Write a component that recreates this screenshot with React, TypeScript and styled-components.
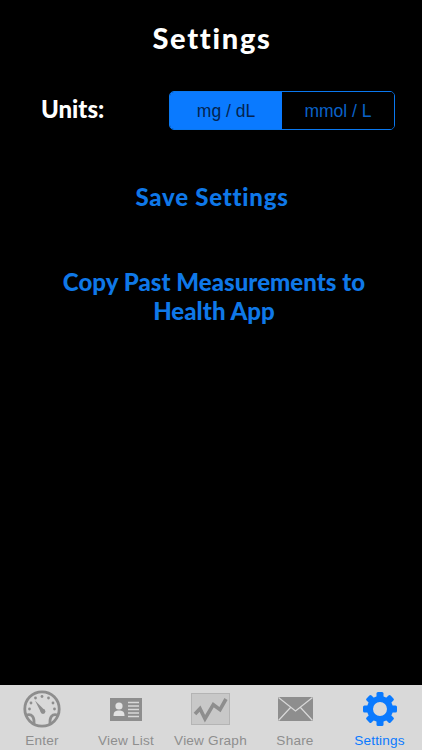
import React from "react";
import styled, { createGlobalStyle } from "styled-components";

const Global = createGlobalStyle`
  html, body { margin: 0; padding: 0; background: #000; }
  #root { height: 750px; }
`;
const hand = `"Lato", "Liberation Sans", sans-serif`;
const ios = `"Liberation Sans", Arial, sans-serif`;

const Page = styled.div`
  width: 422px; height: 750px; background: #000; display: flex; flex-direction: column; overflow: hidden;
`;
const Main = styled.main`
  flex: 1; display: flex; flex-direction: column; align-items: center; padding-top: 20px;
`;
const Title = styled.h1`
  margin: 0; padding-left: 2px; height: 36px; color: #fff; font: 900 29px/36px ${hand}; letter-spacing: 1.7px;
`;
const UnitsRow = styled.div`
  align-self: stretch; display: flex; align-items: center; justify-content: space-between;
  margin-top: 35px; padding: 0 27px 0 41px;
`;
const UnitsLabel = styled.span`
  color: #fff; font: 900 24px/30px ${hand}; position: relative; top: -2px;
`;
const Segments = styled.div`
  width: 226px; height: 39px; box-sizing: border-box; display: flex; border: 1.5px solid #0a78f0; border-radius: 5px; overflow: hidden;
`;
const Segment = styled.div<{ $on?: boolean }>`
  flex: 1; display: flex; align-items: center; justify-content: center;
  font: 400 17.5px/20px ${ios};
  background: ${p => (p.$on ? "#0a7aff" : "#000")};
  color: ${p => (p.$on ? "#04244f" : "#0a62c8")};
`;
const Action = styled.button<{ $gap: number; $tracking: number; $inset: number }>`
  margin-top: ${p => p.$gap}px; padding: 0 0 0 ${p => p.$inset}px; border: 0; background: none; width: 340px;
  color: #0f78e8; font: 900 24px/29px ${hand}; letter-spacing: ${p => p.$tracking}px; text-align: center;
`;
const TabBar = styled.nav`
  height: 65px; background: #d9d9d9; display: grid; grid-template-columns: 84px 84px 85px 84px 85px;
`;
const Tab = styled.div<{ $on?: boolean }>`
  display: flex; flex-direction: column; align-items: center;
  color: ${p => (p.$on ? "#0a7aff" : "#8e8e8e")};
`;
const IconSlot = styled.div`
  height: 48px; display: flex; align-items: center; justify-content: center;
`;
const TabLabel = styled.span`
  font: 400 13.6px/16px ${ios}; letter-spacing: 0.2px; white-space: nowrap;
`;

const Gauge = () => (
  <svg width="38" height="38" viewBox="0 0 38 38" fill="none">
    <circle cx="19" cy="19" r="17.2" stroke="#8e8e8e" strokeWidth="2.8" />
    <path d="M3.5 25 C9 23.5 11.5 27 11 34 M34.5 25 C29 23.5 26.5 27 27 34" stroke="#8e8e8e" strokeWidth="2.8" />
    <path d="M12 10.5 L18 22.5 L21.5 20Z" fill="#8e8e8e" />
    <circle cx="20" cy="21.5" r="2.4" fill="#8e8e8e" />
    <g fill="#8e8e8e">
      <circle cx="6.5" cy="19" r="1.4" /><circle cx="8" cy="13" r="1.4" /><circle cx="12.5" cy="8" r="1.4" />
      <circle cx="19" cy="6.5" r="1.4" /><circle cx="25.5" cy="8" r="1.4" /><circle cx="30" cy="13" r="1.4" /><circle cx="31.5" cy="19" r="1.4" />
    </g>
  </svg>
);
const Card = () => (
  <svg width="32" height="23" viewBox="0 0 32 23">
    <rect width="32" height="23" fill="#8e8e8e" />
    <circle cx="9" cy="8" r="3.6" fill="#e2e2e2" />
    <path d="M3.5 18 C3.5 13 6 12.5 9 12.5 C12 12.5 14.5 13 14.5 18Z" fill="#e2e2e2" />
    <path d="M18 4.5H29M18 8H29M18 11.5H29M18 15H29M18 18.5H29" stroke="#d8d8d8" strokeWidth="1.5" />
  </svg>
);
const Graph = () => (
  <svg width="39" height="32" viewBox="0 0 39 32">
    <rect x=".5" y=".5" width="38" height="31" fill="#c8c8c8" stroke="#b4b4b4" />
    <path d="M4 21 L9 15.7 L14 25.7 L22.3 11.7 L29 16.7 L35 6" fill="none" stroke="#8e8e8e" strokeWidth="3.6" />
  </svg>
);
const Mail = () => (
  <svg width="35" height="24" viewBox="0 0 35 24">
    <rect width="35" height="24" fill="#8e8e8e" />
    <path d="M0.5 0.5 L17.5 14 L34.5 0.5 M0.5 23.5 L12.5 10.5 M34.5 23.5 L22.5 10.5" fill="none" stroke="#d9d9d9" strokeWidth="1.2" />
  </svg>
);
const Gear = () => {
  const teeth = Array.from({ length: 8 }, (_, i) => i * 45);
  return (
    <svg width="36" height="36" viewBox="0 0 36 36">
      {teeth.map(a => (
        <rect key={a} x="14.5" y="1" width="7" height="8" rx="1.5" fill="#0a7aff" transform={`rotate(${a} 18 18)`} />
      ))}
      <circle cx="18" cy="18" r="10" fill="none" stroke="#0a7aff" strokeWidth="6" />
    </svg>
  );
};

const tabs = [
  { label: "Enter", icon: <Gauge /> },
  { label: "View List", icon: <Card /> },
  { label: "View Graph", icon: <Graph /> },
  { label: "Share", icon: <Mail /> },
  { label: "Settings", icon: <Gear />, on: true },
];

export default function App() {
  return (
    <Page>
      <Global />
      <Main>
        <Title>Settings</Title>
        <UnitsRow>
          <UnitsLabel>Units:</UnitsLabel>
          <Segments>
            <Segment $on>mg / dL</Segment>
            <Segment>mmol / L</Segment>
          </Segments>
        </UnitsRow>
        <Action $gap={52} $tracking={0.75} $inset={2}>Save Settings</Action>
        <Action $gap={56} $tracking={0.05} $inset={6}>Copy Past Measurements to Health App</Action>
      </Main>
      <TabBar>
        {tabs.map(t => (
          <Tab key={t.label} $on={t.on}>
            <IconSlot>{t.icon}</IconSlot>
            <TabLabel>{t.label}</TabLabel>
          </Tab>
        ))}
      </TabBar>
    </Page>
  );
}
